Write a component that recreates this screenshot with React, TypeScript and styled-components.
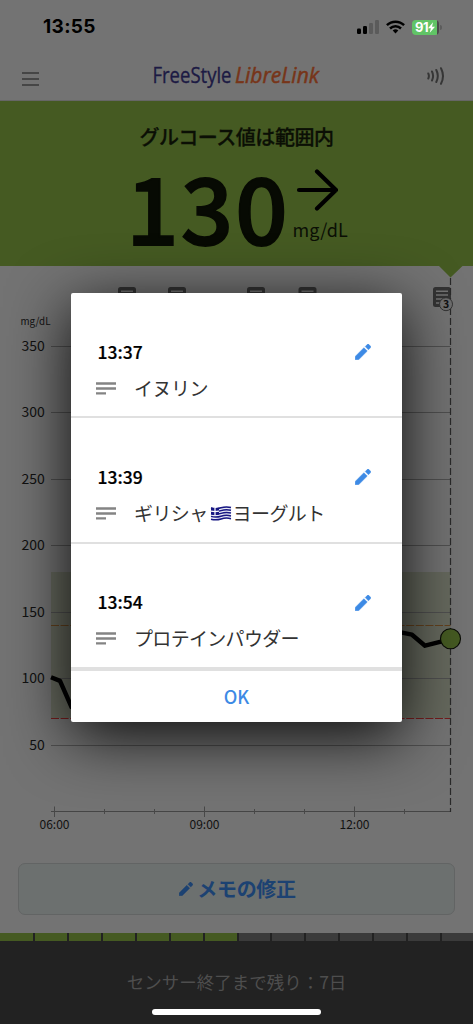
import React from 'react';
import styled, { createGlobalStyle } from 'styled-components';

const jp = "'Noto Sans CJK JP', 'Noto Sans', sans-serif";

const GlobalStyle = createGlobalStyle`
  * { box-sizing: border-box; }
  body { margin: 0; background: #737373; font-family: ${jp}; }
`;

const Screen = styled.div`
  position: relative;
  display: flex;
  flex-direction: column;
  width: 473px;
  height: 1024px;
  overflow: hidden;
  background: #737373;
  color: #0b0b0b;
`;

const StatusBar = styled.div`
  display: flex;
  align-items: center;
  justify-content: space-between;
  height: 54px;
  padding: 0 31px 0 43px;
`;

const Clock = styled.div`
  font: 700 19px/24px Inter, sans-serif;
  letter-spacing: 0.35px;
  color: #000;
`;

const StatusIcons = styled.div`
  display: flex;
  align-items: center;
  gap: 7px;
`;

const Battery = styled.div`
  display: flex;
  align-items: center;
  gap: 1px;
`;

const BatteryBody = styled.div`
  display: flex;
  align-items: center;
  width: 27px;
  height: 15px;
  padding-left: 3px;
  border-radius: 4px;
  background: linear-gradient(90deg, #61c466 25px, #4a4a4a 25px);
  font: 700 13px/15px Inter, sans-serif;
  letter-spacing: -0.4px;
  color: #fff;
`;

const BatteryTip = styled.div`
  width: 2px;
  height: 5px;
  border-radius: 0 2px 2px 0;
  background: #5c5c5c;
`;

const NavBar = styled.header`
  display: flex;
  align-items: center;
  justify-content: space-between;
  height: 47px;
  padding: 0 28px 0 22px;
  border-bottom: 1px solid #666;
`;

const Banner = styled.section`
  display: flex;
  flex-direction: column;
  align-items: center;
  height: 165px;
  padding-top: 21px;
  background: #455a22;
`;

const BannerTitle = styled.div`
  font-size: 20px;
  line-height: 30px;
  font-weight: 500;
  color: #0b0f05;
  letter-spacing: -0.45px;
  -webkit-text-stroke: 0.3px #0b0f05;
`;

const Reading = styled.div`
  display: flex;
  align-items: flex-start;
  gap: 2px;
  margin-left: 1px;
`;

const ReadingValue = styled.div`
  margin-top: 10px;
  font-size: 92px;
  line-height: 85px;
  font-weight: 500;
  letter-spacing: 2px;
  color: #070a03;
  -webkit-text-stroke: 1.8px #070a03;
`;

const ReadingSide = styled.div`
  display: flex;
  flex-direction: column;
  padding-top: 15px;
`;

const ReadingUnit = styled.div`
  margin: 6px 0 0 1px;
  font-size: 18px;
  line-height: 24px;
  color: #0b0f05;
`;

const ChartArea = styled.section`
  height: 597px;
`;

const EditButton = styled.button`
  display: flex;
  align-items: center;
  justify-content: center;
  gap: 4px;
  width: 437px;
  height: 52px;
  margin: 0 0 0 18px;
  padding: 0 0 0 2px;
  border: 1px solid #626464;
  border-radius: 7px;
  background: #6c706f;
  color: #1c4272;
  font: 700 20px/28px ${jp};
  letter-spacing: -0.3px;
`;

const Progress = styled.div`
  display: flex;
  gap: 2px;
  height: 8px;
  margin-top: 18px;
  background: #222;
`;

const Segment = styled.div<{ $done?: boolean; $first?: boolean }>`
  flex: none;
  width: ${p => (p.$first ? 33.2 : 31.9)}px;
  background: ${p => (p.$done ? '#455a22' : '#3b3b3b')};
`;

const Footer = styled.footer`
  display: flex;
  flex: 1;
  justify-content: center;
  padding-top: 27px;
  background: #222;
  color: #4e4e4e;
  font-size: 17.5px;
  line-height: 28px;
`;

const HomeIndicator = styled.div`
  position: absolute;
  left: 152px;
  bottom: 9px;
  width: 169px;
  height: 6px;
  border-radius: 3px;
  background: #fff;
`;

const Dialog = styled.div`
  position: absolute;
  top: 293px;
  left: 71px;
  width: 331px;
  height: 429px;
  border-radius: 2px;
  background: #fff;
  box-shadow: 0 14px 62px rgba(0, 0, 0, 0.9);
`;

const Entry = styled.div<{ $last?: boolean }>`
  display: flex;
  flex-direction: column;
  height: ${p => (p.$last ? 127 : 125.3)}px;
  padding: 44px 31px 0 25px;
  border-bottom: ${p => (p.$last ? 4 : 2)}px solid #e0e0e0;
`;

const EntryHead = styled.div`
  display: flex;
  align-items: center;
  justify-content: space-between;
  height: 30px;
  padding-left: 1.5px;
`;

const EntryTime = styled.div`
  margin-top: -2px;
  font-size: 17.5px;
  font-weight: 500;
  color: #000;
  -webkit-text-stroke: 0.2px #000;
`;

const EntryBody = styled.div`
  display: flex;
  align-items: center;
  gap: 18px;
  height: 30px;
  margin-top: 6px;
  font-size: 19px;
  color: #333;
`;

const EntryText = styled.div<{ $spacing: number }>`
  display: flex;
  align-items: center;
  margin-top: -2px;
  letter-spacing: ${p => p.$spacing}px;
`;

const OkButton = styled.button`
  display: block;
  width: 100%;
  height: 50px;
  padding: 0;
  border: 0;
  background: none;
  color: #3d8ae5;
  font: 500 18px/26px ${jp};
`;

const Pencil = ({ size, color }: { size: number; color: string }) => (
  <svg width={size} height={size} viewBox="3 3 18 18" fill={color} stroke={color} strokeWidth="0.5" strokeLinejoin="round">
    <path d="M3.2 17V20.8H7L16.8 11 13 7.2zM20.6 7c.4-.4.4-1 0-1.4l-2.2-2.2c-.4-.4-1-.4-1.4 0l-2.5 2.5 3.6 3.6z" />
  </svg>
);

const NoteLines = () => (
  <svg width="20" height="13" viewBox="0 0 20 13" fill="#848484">
    <path d="M0 .2h20v2.5H0zM0 5.2h20v2.5H0zM0 10.2h10v2.3H0z" />
  </svg>
);

const GreekFlag = () => (
  <svg width="22" height="17" viewBox="0 0 22 17" role="img" aria-label="ギリシャ" style={{ flexShrink: 0, margin: '3px 1px 0 2px' }}>
    <path d="M1 2.5Q6 4 11 2.2T21 1.8V14Q16 13 11 14.5T1 15z" fill="#e9ebf5" />
    <g fill="none" stroke="#171783" strokeWidth="1.5">
      <path d="M1 3Q6 4.4 11 2.8T21 2.5M1 5.8Q6 7.2 11 5.6T21 5.3M1 8.6Q6 10 11 8.4T21 8.1M1 11.4Q6 12.8 11 11.2T21 10.9M1 14.2Q6 15.6 11 14T21 13.7" />
    </g>
    <path d="M1 2.4Q5 3.6 9 2.7V9.5Q5 10.5 1 9.5z" fill="#171783" />
    <path d="M5 3v7M1 6.2Q5 7 9 6.2" fill="none" stroke="#fff" strokeWidth="1.2" />
  </svg>
);

const yFor = (v: number) => 545.5 - v * 1.33;
const values = [350, 300, 250, 200, 150, 100, 50];
const ticks = [54.5, 104.5, 154.5, 204.5, 254.5, 304.5, 354.5, 404.5];
const hours = ['06:00', '09:00', '12:00'];
const notes = [118, 168, 247, 298.5, 433];

const Chart = () => (
  <svg width="473" height="597" viewBox="0 0 473 597" fontFamily={jp} fill="#111">
    <rect x="51" y="306" width="399.5" height="146" fill="#66695e" />
    <path d="M439 0h23.5L450.5 11.5z" fill="#455a22" />
    <text x="20.5" y="58.5" fontSize="10.5" textLength="30" lengthAdjust="spacingAndGlyphs">mg/dL</text>
    {values.map(v => (
      <g key={v}>
        <path d={`M51 ${Math.floor(yFor(v)) + 0.5}H450.5`} stroke="#505050" />
        <text x="44.8" y={yFor(v) + 4.6} fontSize="14" textAnchor="end">{v}</text>
      </g>
    ))}
    <path d="M51 359.5H450.5" stroke="#65421d" strokeWidth="1.2" strokeDasharray="8 1.6" />
    <path d="M51 452.5H450.5" stroke="#751d1d" strokeWidth="1.2" strokeDasharray="8 1.6" />
    <path d="M51 545.5H450.5" stroke="#454545" />
    {ticks.map((x, i) => (
      <path key={x} d={i % 3 ? `M${x} 543v5` : `M${x} 540.5v10.5`} stroke="#484848" />
    ))}
    {hours.map((h, i) => (
      <text key={h} x={54.5 + i * 150} y="563.4" fontSize="12" textAnchor="middle">{h}</text>
    ))}
    {notes.map(x => (
      <g key={x}>
        <rect x={x} y="21" width="18" height="20" rx="2.5" fill="#333" />
        <path d={`M${x + 3} 25.3h12M${x + 3} 29h12M${x + 3} 33h12M${x + 3} 37h7`} stroke="#737373" strokeWidth="1.5" />
      </g>
    ))}
    <path d="M450.5 12V546" stroke="#292929" strokeWidth="1.2" strokeDasharray="7 3" />
    <circle cx="446" cy="38.2" r="6.5" fill="#6e6e6e" stroke="#333" />
    <text x="446" y="42" fontSize="10.5" fontWeight="700" textAnchor="middle">3</text>
    <g fill="none" stroke="#000" strokeWidth="4.4" strokeLinejoin="round">
      <path d="M51 411.3l9 3.6L71.5 441l10 5" />
      <path d="M390 365l12 1.6 10 2.1 13 11 16-4 9-3" />
    </g>
    <circle cx="450.5" cy="372.7" r="10" fill="#455a22" stroke="#090b05" strokeWidth="1.1" />
  </svg>
);

const LogoMark = styled.svg`
  margin-left: 8px;
  overflow: visible;
`;

const Logo = () => (
  <LogoMark width="168" height="34" viewBox="0 0 168 34">
    <text x="-0.5" y="23" fontFamily="'Open Sans', sans-serif" fontSize="22" fill="#1c1a43" stroke="#1c1a43" strokeWidth="0.35" textLength="79" lengthAdjust="spacingAndGlyphs">FreeStyle</text>
    <text x="82" y="23" fontFamily="'Open Sans', sans-serif" fontSize="21.5" fontStyle="italic" fill="#773519" stroke="#773519" strokeWidth="0.5" textLength="84" lengthAdjust="spacingAndGlyphs">LibreLink</text>
  </LogoMark>
);

const entries = [
  { time: '13:37', before: 'イヌリン', spacing: -0.5 },
  { time: '13:39', before: 'ギリシャ', after: 'ヨーグルト', spacing: -0.6 },
  { time: '13:54', before: 'プロテインパウダー', spacing: -0.68 },
];

export default function App() {
  return (
    <Screen>
      <GlobalStyle />
      <StatusBar>
        <Clock>13:55</Clock>
        <StatusIcons>
          <svg width="22" height="14" viewBox="0 0 22 14">
            <rect x="0" y="8.5" width="4" height="5.5" rx="1.2" />
            <rect x="6" y="6" width="4" height="8" rx="1.2" />
            <rect x="12" y="3" width="4" height="11" rx="1.2" fill="#5b5b5b" />
            <rect x="18" y="0" width="4" height="14" rx="1.2" fill="#5b5b5b" />
          </svg>
          <svg width="19" height="14" viewBox="0 0 19 14" fill="none" stroke="#000" strokeWidth="2.5">
            <path d="M.9 5.1a12.4 12.4 0 0 1 17.2 0M4 8.5a8 8 0 0 1 11 0" />
            <path d="M9.5 13.5l-2.8-2.9a4 4 0 0 1 5.6 0z" fill="#000" stroke="none" />
          </svg>
          <Battery>
            <BatteryBody>
              91
              <svg width="7" height="11" viewBox="0 0 8 12" fill="#fff"><path d="M5.8 0L0 6.8h3.3L2 12l6-7H4.6z" /></svg>
            </BatteryBody>
            <BatteryTip />
          </Battery>
        </StatusIcons>
      </StatusBar>
      <NavBar>
        <svg width="17" height="14" viewBox="0 0 17 14" fill="#464646" style={{ marginTop: 4 }}>
          <path d="M0 0h17v2H0zM0 6h17v2H0zM0 12h17v2H0z" />
        </svg>
        <Logo />
        <svg width="18" height="18" viewBox="0 0 18 18" fill="none" stroke="#363636" strokeWidth="2" strokeLinecap="round" style={{ marginTop: -2 }}>
          <path d="M1.3 6.5q1.2 2.5 0 5M5 4.5q2.2 4.5 0 9M9.3 3q3 6 0 12M14 1.2q4 7.8 0 15.6" />
        </svg>
      </NavBar>
      <Banner>
        <BannerTitle>グルコース値は範囲内</BannerTitle>
        <Reading>
          <ReadingValue>130</ReadingValue>
          <ReadingSide>
            <svg width="46" height="44" viewBox="0 0 46 44" fill="none" stroke="#000" strokeWidth="4.2" strokeLinecap="round" strokeLinejoin="round">
              <path d="M7 23H44M25 4.5l19 18.5-19 18.5" />
            </svg>
            <ReadingUnit>mg/dL</ReadingUnit>
          </ReadingSide>
        </Reading>
      </Banner>
      <ChartArea><Chart /></ChartArea>
      <EditButton><Pencil size={14} color="#1c4272" />メモの修正</EditButton>
      <Progress>
        {Array.from({ length: 14 }, (_, i) => (
          <Segment key={i} $done={i < 7} $first={i === 0} />
        ))}
      </Progress>
      <Footer>センサー終了まで残り：7日</Footer>
      <Dialog>
        {entries.map((e, i) => (
          <Entry key={e.time} $last={i === 2}>
            <EntryHead>
              <EntryTime>{e.time}</EntryTime>
              <Pencil size={16} color="#3d8ae5" />
            </EntryHead>
            <EntryBody>
              <NoteLines />
              <EntryText $spacing={e.spacing}>
                {e.before}
                {e.after && <GreekFlag />}
                {e.after}
              </EntryText>
            </EntryBody>
          </Entry>
        ))}
        <OkButton>OK</OkButton>
      </Dialog>
      <HomeIndicator />
    </Screen>
  );
}
